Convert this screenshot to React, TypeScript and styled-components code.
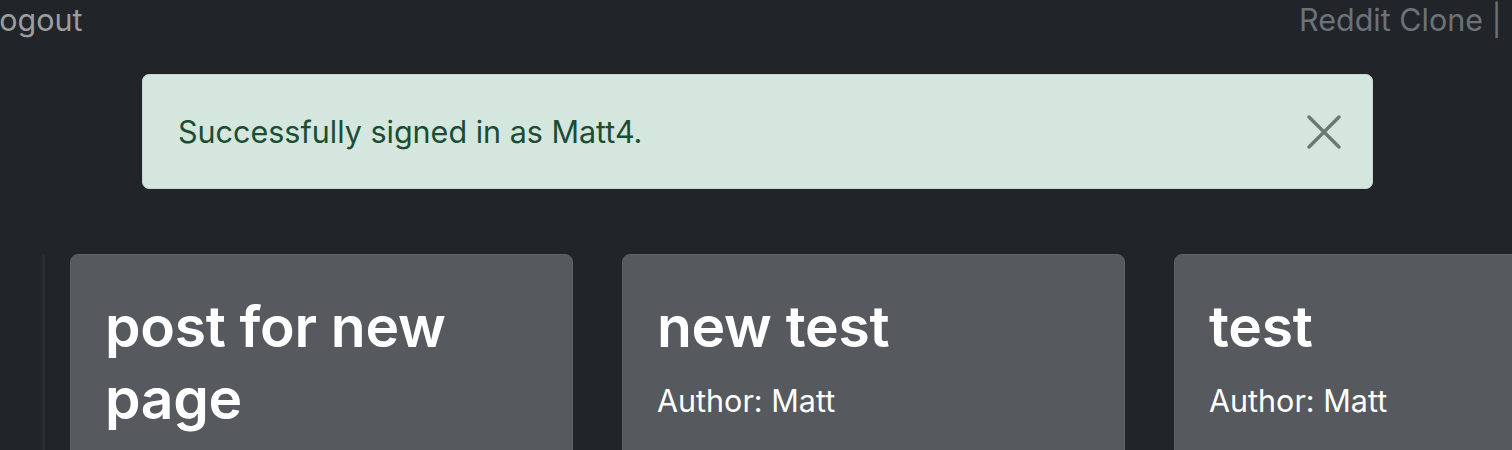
import React from "react";
import styled, { createGlobalStyle } from "styled-components";

const GlobalStyle = createGlobalStyle`
  html, body {
    margin: 0;
    padding: 0;
    background: #212529;
    overflow: hidden;
  }
  body {
    font-family: Inter, "Noto Sans", "Liberation Sans", sans-serif;
    color: #dee2e6;
  }
`;

const Page = styled.div`
  width: 1512px;
  height: 450px;
  overflow: hidden;
  display: flex;
  flex-direction: column;
  & > * {
    flex: none;
  }
`;

const NavBar = styled.nav`
  display: flex;
  align-items: center;
  height: 40px;
  margin-left: -18px;
  font-size: 30.5px;
  white-space: nowrap;
`;

const NavLink = styled.span<{ $muted?: boolean }>`
  color: ${(p) => (p.$muted ? "#6c7278" : "#9b9d9f")};
  line-height: 40px;
`;

const NavRight = styled.div`
  margin-left: auto;
  width: 213px;
  display: flex;
  gap: 10px;
`;

const Alert = styled.div`
  margin: 34px 0 0 142px;
  width: 1231px;
  height: 115px;
  box-sizing: border-box;
  background: #d4e6de;
  border: 1px solid #bddbcd;
  border-radius: 7px;
  display: flex;
  align-items: center;
  justify-content: space-between;
  padding: 0 30px 0 35px;
  color: #1b4d33;
  font-size: 30.5px;
`;

const CloseButton = styled.button`
  width: 36px;
  height: 36px;
  padding: 0;
  border: 0;
  background: transparent;
  display: flex;
  align-items: center;
  justify-content: center;
  cursor: pointer;
`;

const Feed = styled.div`
  display: flex;
  align-items: flex-start;
  margin-top: 65px;
  padding-left: 42px;
`;

const Rule = styled.div`
  width: 3px;
  height: 200px;
  background: #2a2e32;
  margin-right: 25px;
  flex: none;
`;

const Cards = styled.div`
  display: flex;
  gap: 49px;
`;

const Card = styled.article`
  width: 503px;
  height: 240px;
  flex: none;
  box-sizing: border-box;
  background: #565a5f;
  border: 1px solid #5d6166;
  border-radius: 8px;
  padding: 36px 34px;
  color: #ffffff;
`;

const Title = styled.h2`
  margin: 0 0 15px;
  font-size: 57px;
  font-weight: 600;
  line-height: 72px;
  letter-spacing: -0.3px;
`;

const Author = styled.p`
  margin: 0;
  font-size: 30.5px;
  line-height: 46px;
`;

const posts = [
  { title: "post for new page", author: "Matt" },
  { title: "new test", author: "Matt" },
  { title: "test", author: "Matt" },
];

export default function App() {
  return (
    <Page>
      <GlobalStyle />
      <NavBar>
        <NavLink>Logout</NavLink>
        <NavRight>
          <NavLink $muted>Reddit Clone |</NavLink>
          <NavLink $muted>Home</NavLink>
        </NavRight>
      </NavBar>
      <Alert role="alert">
        <span>Successfully signed in as Matt4.</span>
        <CloseButton aria-label="Close">
          <svg width="34" height="34" viewBox="0 0 34 34">
            <path
              d="M2 2 L32 32 M32 2 L2 32"
              stroke="#6b7a72"
              strokeWidth="3.4"
              strokeLinecap="round"
              fill="none"
            />
          </svg>
        </CloseButton>
      </Alert>
      <Feed>
        <Rule />
        <Cards>
          {posts.map((p) => (
            <Card key={p.title}>
              <Title>{p.title}</Title>
              <Author>Author: {p.author}</Author>
            </Card>
          ))}
        </Cards>
      </Feed>
    </Page>
  );
}
